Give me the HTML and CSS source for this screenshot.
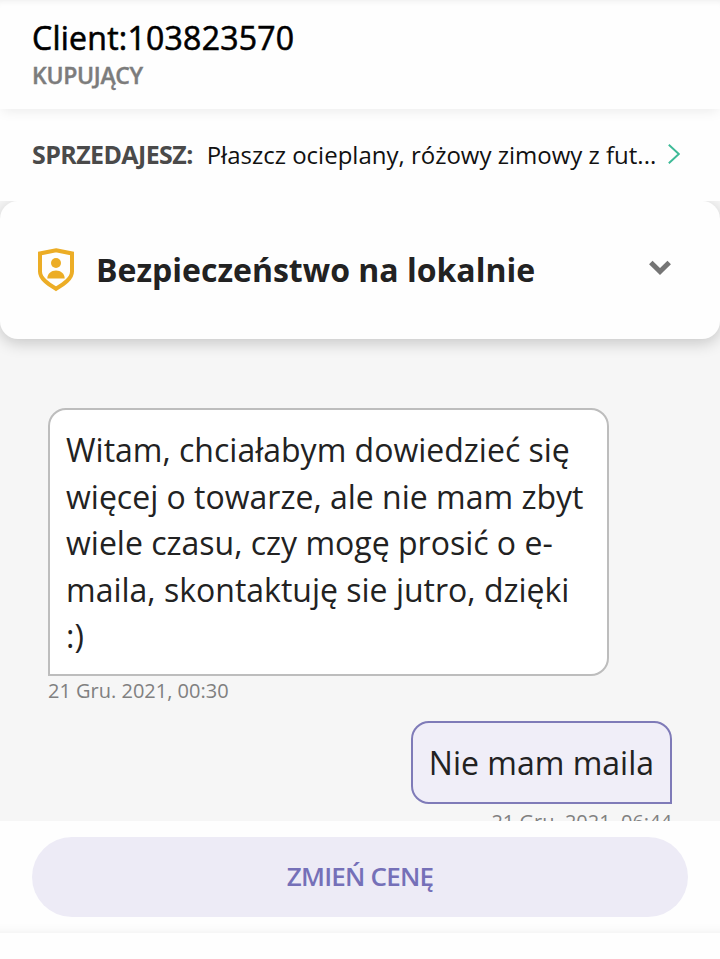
FILE: index.html
```html
<!DOCTYPE html>
<html lang="pl">
<head>
    <meta charset="UTF-8">
    <meta name="viewport" content="width=device-width, initial-scale=1.0">
    <title>Client:103823570</title>
    <link rel="stylesheet" href="styles.css">
</head>
<body>
    <header class="chat-header">
        <h1>Client:103823570</h1>
        <p class="role">KUPUJĄCY</p>
    </header>

    <a class="offer" href="#">
        <span class="offer-label">SPRZEDAJESZ:</span>
        <span class="offer-title">Płaszcz ocieplany, różowy zimowy z fut...</span>
        <svg class="offer-arrow" width="12" height="20" viewBox="0 0 12 20" fill="none" stroke="#3dba97" stroke-width="1.9">
            <path d="M.8.8 10.800 10 .8 19.200"/>
        </svg>
    </a>

    <main class="chat">
        <section class="safety">
            <svg class="shield" width="38" height="44" viewBox="0 0 38 44">
                <path d="M19 2.200 35 5.500V23.500c0 7-7.500 12-16 17.300C10.500 35.500 3 30.500 3 23.500V5.500Z" fill="none" stroke="#ecad26" stroke-width="4"/>
                <circle cx="19" cy="15" r="5" fill="#ecad26"/>
                <path d="M10.300 30.500c0-5 4-8 8.700-8s8.700 3 8.700 8Z" fill="#ecad26"/>
            </svg>
            <h2>Bezpieczeństwo na lokalnie</h2>
            <svg class="chevron" width="22" height="16" viewBox="0 0 22 16" fill="none" stroke="#757575" stroke-width="5">
                <path d="m1.800 2.500 9.200 9 9.200-9"/>
            </svg>
        </section>

        <div class="messages">
            <div class="message received">
                <p class="bubble">Witam, chciałabym dowiedzieć się więcej o towarze, ale nie mam zbyt wiele czasu, czy mogę prosić o e-maila, skontaktuję sie jutro, dzięki :)</p>
                <time>21 Gru. 2021, 00:30</time>
            </div>
            <div class="message sent">
                <p class="bubble">Nie mam maila</p>
                <time>21 Gru. 2021, 06:44</time>
            </div>
        </div>
    </main>

    <div class="actions">
        <button type="button">ZMIEŃ CENĘ</button>
    </div>
    <footer class="composer"></footer>
</body>
</html>
```
FILE: styles.css
```css
* {
    box-sizing: border-box;
}

body {
    display: flex;
    flex-direction: column;
    height: 959px;
    margin: 0;
    overflow: hidden;
    font-family: 'Open Sans', 'Noto Sans', sans-serif;
    color: #222;
    background-color: #fefefe;
}

h1, h2, p {
    margin: 0;
}

.chat-header {
    height: 109px;
    padding: 16px 32px 0;
    background-color: #fefefe;
    box-shadow: 0 4px 12px -2px rgba(0,0,0,0.08), inset 0 6px 6px -5px rgba(0,0,0,0.07);
}

h1 {
    font-size: 32px;
    font-weight: 500;
    line-height: 44px;
    letter-spacing: 0.25px;
    color: #000;
    -webkit-text-stroke: 0.6px #000;
}

.role {
    font-size: 23px;
    font-weight: 600;
    line-height: 30px;
    letter-spacing: -0.3px;
    color: #7c7c7c;
    -webkit-text-stroke: 0.4px #7c7c7c;
}

.offer {
    display: flex;
    align-items: center;
    height: 92px;
    padding: 0 32px 2px;
    color: #111;
    text-decoration: none;
    white-space: nowrap;
}

.offer-label {
    margin-right: 14px;
    font-size: 25px;
    font-weight: 700;
    letter-spacing: -0.6px;
    color: #4a4a4a;
}

.offer-title {
    font-size: 24px;
}

.offer-arrow {
    flex: none;
    margin-left: 12px;
}

.chat {
    height: 620px;
    overflow: hidden;
    background-color: #f6f6f6;
}

.safety {
    display: flex;
    align-items: center;
    height: 138px;
    padding: 0 49px 0 37px;
    border-radius: 18px;
    background-color: #fefefe;
    box-shadow: 0 4px 16px rgba(0,0,0,0.2);
}

h2 {
    margin-left: 21px;
    font-size: 32px;
    font-weight: 700;
    line-height: 44px;
}

.chevron {
    margin: 0 0 4px auto;
}

.messages {
    padding: 69px 48px 0;
}

.message {
    display: flex;
    flex-direction: column;
    align-items: flex-start;
}

.sent {
    align-items: flex-end;
    margin-top: 15px;
}

.bubble {
    max-width: 561px;
    padding: 17px 16px 14px;
    border: 2px solid #bdbdbd;
    border-radius: 18px 18px 18px 0;
    font-size: 32px;
    line-height: 46.6px;
    background-color: #fff;
}

.sent .bubble {
    padding-bottom: 15px;
    border-color: #7f7bb8;
    border-radius: 18px 18px 0 18px;
    background-color: #f0eef8;
}

time {
    font-size: 20px;
    line-height: 30px;
    color: #808080;
}

.sent time {
    margin-top: 3px;
}

.actions {
    height: 112px;
    padding: 16px 32px 0;
    background-color: #fefefe;
    box-shadow: inset 0 -12px 10px -10px rgba(0,0,0,0.05);
}

button {
    display: block;
    width: 100%;
    height: 80px;
    padding: 0 0 2px;
    border: none;
    border-radius: 40px;
    font-family: inherit;
    font-size: 26px;
    font-weight: 600;
    letter-spacing: -0.8px;
    color: #7570b8;
    background-color: #edebf6;
}

.composer {
    flex: 1;
    background-color: #fefefe;
}
```
